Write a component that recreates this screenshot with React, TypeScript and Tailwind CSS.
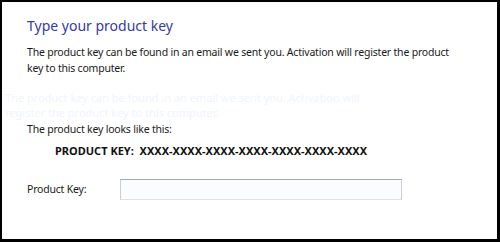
export default function App() {
  return (
    <div
      className="box-border h-[242px] w-[500px] overflow-hidden border-t-2 border-r-[3px] border-b-[3px] border-l-2 border-black bg-white"
      style={{ fontFamily: '"Noto Sans", "Open Sans", sans-serif' }}
    >
      <div className="pt-[14px] pl-[25px]">
        <h1 className="text-[14px] leading-[20px] text-[#353ba4]">Type your product key</h1>
        <p className="mt-[8px] text-[10.5px] leading-[16px] tracking-[-0.2px] whitespace-nowrap text-[#1a1a1a]">
          The product key can be found in an email we sent you. Activation will register the product
          <br />
          key to this computer.
        </p>
        {/* faint ghosting from the screen capture */}
        <div className="mt-[14px] -ml-[22px] text-[11px] leading-[15px] text-[#f0f4fe]">
          <div>The product key can be found in an email we sent you. Activation will</div>
          <div>register the product key to this computer.</div>
        </div>
        <p className="mt-[1px] text-[10.5px] leading-[16px] tracking-[-0.2px] text-[#1a1a1a]">
          The product key looks like this:
        </p>
        <p className="mt-[6px] pl-[28px] text-[11px] leading-[16px] font-bold text-[#111]">
          PRODUCT KEY:&nbsp; XXXX-XXXX-XXXX-XXXX-XXXX-XXXX-XXXX
        </p>
        <div className="mt-[20px] flex items-center">
          <label className="w-[93px] text-[10.5px] tracking-[-0.2px] text-[#1a1a1a]">Product Key:</label>
          <input
            type="text"
            className="h-[21px] w-[282px] border border-t-[#9ea6b8] border-r-[#c8cdd8] border-b-[#dfe2e8] border-l-[#c8cdd8] bg-[#fbfcfe] outline-none"
          />
        </div>
      </div>
    </div>
  );
}
